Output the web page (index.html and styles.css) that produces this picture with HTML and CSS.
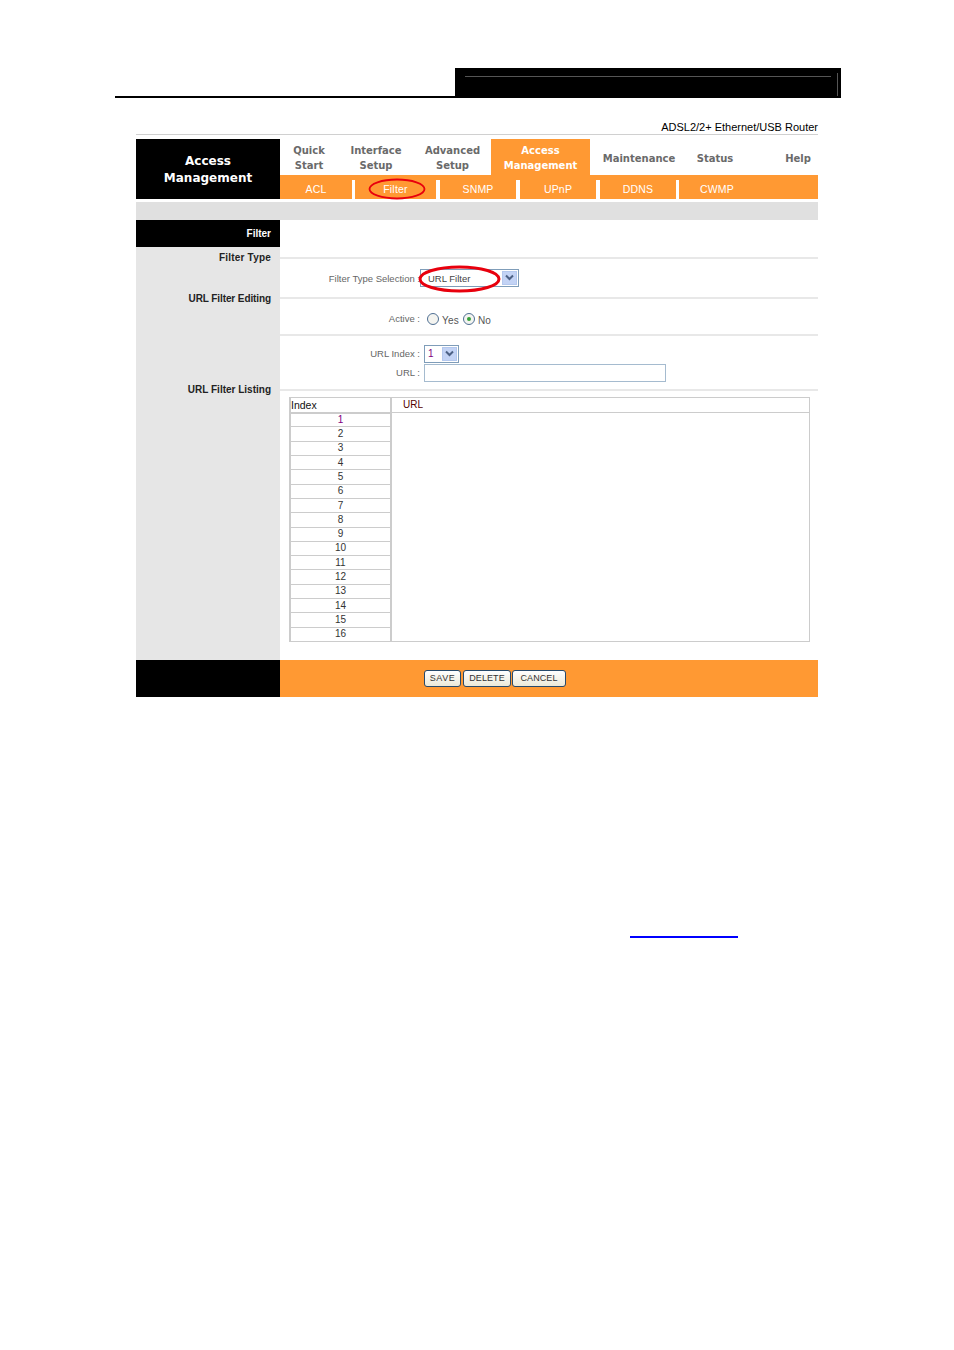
FILE: index.html
```html
<!DOCTYPE html>
<html lang="en">
<head>
    <meta charset="UTF-8">
    <title>Access Management - Filter</title>
    <link rel="stylesheet" href="styles.css">
</head>
<body>
    <div class="doc-header">
        <div class="doc-header-left"></div>
        <div class="doc-header-block">
            <div class="doc-header-line"></div>
            <div class="doc-header-tick"></div>
        </div>
    </div>

    <div class="router">
        <div class="model">ADSL2/2+ Ethernet/USB Router</div>

        <div class="top">
            <div class="brand">Access<br>Management</div>
            <div class="nav">
                <div class="tabs">
                    <div class="tab w-quick">Quick<br>Start</div>
                    <div class="tab w-iface">Interface<br>Setup</div>
                    <div class="tab w-adv">Advanced<br>Setup</div>
                    <div class="tab w-access active">Access<br>Management</div>
                    <div class="tab w-maint">Maintenance</div>
                    <div class="tab w-status">Status</div>
                    <div class="tab w-help">Help</div>
                </div>
                <div class="subtabs">
                    <div class="sub w-acl">ACL</div>
                    <div class="sep"></div>
                    <div class="sub w-filter">Filter
                        <svg class="mark mark-filter" width="58" height="22" viewBox="0 0 58 22"><ellipse cx="29" cy="11" rx="27.5" ry="9.5" /></svg>
                    </div>
                    <div class="sep sep-wide"></div>
                    <div class="sub w-sub">SNMP</div>
                    <div class="sep sep-wide"></div>
                    <div class="sub w-sub">UPnP</div>
                    <div class="sep sep-wide"></div>
                    <div class="sub w-sub">DDNS</div>
                    <div class="sep"></div>
                    <div class="sub w-sub">CWMP</div>
                </div>
            </div>
        </div>

        <div class="bar"></div>

        <div class="content">
            <div class="side">
                <div class="side-head">Filter</div>
                <div class="side-label first">Filter Type</div>
                <div class="side-label second">URL Filter Editing</div>
                <div class="side-label third">URL Filter Listing</div>
            </div>

            <div class="main">
                <div class="section s-top"></div>

                <div class="section s-type">
                    <div class="field">
                        <div class="field-label">Filter Type Selection :</div>
                        <div class="select select-type">
                            <span class="select-value">URL Filter</span>
                            <span class="select-btn"><svg width="9" height="7" viewBox="0 0 9 7"><path d="M1 1.5 L4.5 5 L8 1.5" /></svg></span>
                            <svg class="mark mark-type" width="84" height="28" viewBox="0 0 84 28"><ellipse cx="41.5" cy="14" rx="39.5" ry="12" /></svg>
                        </div>
                    </div>
                </div>

                <div class="section s-active">
                    <div class="field">
                        <div class="field-label">Active :</div>
                        <div class="radios">
                            <span class="radio"></span><span class="radio-text">Yes</span>
                            <span class="radio on"></span><span class="radio-text">No</span>
                        </div>
                    </div>
                </div>

                <div class="section s-url">
                    <div class="field">
                        <div class="field-label">URL Index :</div>
                        <div class="select select-index">
                            <span class="select-value purple">1</span>
                            <span class="select-btn"><svg width="9" height="7" viewBox="0 0 9 7"><path d="M1 1.5 L4.5 5 L8 1.5" /></svg></span>
                        </div>
                    </div>
                    <div class="field">
                        <div class="field-label">URL :</div>
                        <div class="input"></div>
                    </div>
                </div>

                <table class="list">
                    <thead>
                        <tr><th class="col-index">Index</th><th class="col-url">URL</th></tr>
                    </thead>
                    <tbody>
                        <tr><td class="purple">1</td><td class="url-cell" rowspan="16"></td></tr>
                        <tr><td>2</td></tr>
                        <tr><td>3</td></tr>
                        <tr><td>4</td></tr>
                        <tr><td>5</td></tr>
                        <tr><td>6</td></tr>
                        <tr><td>7</td></tr>
                        <tr><td>8</td></tr>
                        <tr><td>9</td></tr>
                        <tr><td>10</td></tr>
                        <tr><td>11</td></tr>
                        <tr><td>12</td></tr>
                        <tr><td>13</td></tr>
                        <tr><td>14</td></tr>
                        <tr><td>15</td></tr>
                        <tr><td>16</td></tr>
                    </tbody>
                </table>
            </div>
        </div>

        <div class="footer">
            <div class="footer-left"></div>
            <div class="footer-right">
                <button class="btn btn-save">SAVE</button>
                <button class="btn btn-delete">DELETE</button>
                <button class="btn btn-cancel">CANCEL</button>
            </div>
        </div>
    </div>

    <div class="link-line"></div>
</body>
</html>
```

FILE: styles.css
```css
/* Base */
* {
    margin: 0;
    padding: 0;
    box-sizing: border-box;
}

body {
    background: #fff;
    font-family: "Liberation Sans", sans-serif;
    font-size: 10px;
    color: #555;
    min-height: 1350px;
    padding-top: 68px;
}

/* Document header */
.doc-header {
    display: flex;
    align-items: flex-end;
    margin-left: 115px;
    width: 726px;
    height: 30px;
}

.doc-header-left {
    width: 340px;
    height: 2px;
    background: #000;
}

.doc-header-block {
    position: relative;
    width: 386px;
    height: 30px;
    background: #000;
}

.doc-header-line {
    position: absolute;
    left: 10px;
    top: 8px;
    width: 366px;
    height: 1px;
    background: #555;
}

.doc-header-tick {
    position: absolute;
    right: 3px;
    top: 5px;
    width: 1px;
    height: 23px;
    background: #555;
}

/* Router panel */
.router {
    margin-left: 136px;
    width: 682px;
}

.model {
    height: 37px;
    padding-top: 23px;
    line-height: 12px;
    text-align: right;
    font-size: 11px;
    color: #000;
    border-bottom: 1px solid #d0d0d0;
    margin-bottom: 4px;
}

.top {
    display: flex;
    height: 60px;
}

.brand {
    width: 144px;
    background: #000;
    color: #fff;
    font-family: "DejaVu Sans", sans-serif;
    font-weight: bold;
    font-size: 12px;
    line-height: 17px;
    text-align: center;
    padding-top: 14px;
}

.nav {
    flex: 1;
}

.tabs {
    display: flex;
    height: 36px;
}

.tab {
    display: flex;
    align-items: center;
    justify-content: center;
    text-align: center;
    height: 36px;
    padding-top: 2px;
    font-family: "DejaVu Sans", sans-serif;
    font-weight: bold;
    font-size: 10px;
    line-height: 15px;
    color: #6a6a6a;
}

.tab.active {
    background: #ff9933;
    color: #fff;
}

.w-quick { width: 58px; }
.w-iface { width: 76px; }
.w-adv { width: 77px; }
.w-access { width: 99px; }
.w-maint { width: 98px; }
.w-status { width: 54px; }
.w-help { width: 40px; margin-left: auto; }

.subtabs {
    display: flex;
    align-items: flex-end;
    height: 24px;
    background: #ff9933;
}

.sub {
    position: relative;
    height: 24px;
    line-height: 28px;
    text-align: center;
    color: #fff;
    font-size: 10.5px;
    letter-spacing: 0.2px;
}

.w-acl { width: 72px; }
.w-filter { width: 81px; }
.w-sub { width: 76px; }

.sep {
    width: 3px;
    height: 19px;
    background: #fff;
}

.sep-wide {
    width: 4px;
}

/* Red hand-drawn marks */
.mark {
    position: absolute;
    fill: none;
    stroke: #e8000d;
}

.mark-filter {
    left: 13px;
    top: 3px;
    stroke-width: 1.8;
}

.mark-type {
    left: -3px;
    top: -5px;
    stroke-width: 3;
}

.bar {
    height: 18px;
    margin-top: 3px;
    background: #e0e0e0;
}

/* Content */
.content {
    display: flex;
}

.side {
    width: 144px;
    height: 440px;
    background: #e6e6e6;
    color: #222;
    font-weight: bold;
    font-size: 10px;
}

.side-head {
    height: 27px;
    line-height: 27px;
    padding-right: 9px;
    text-align: right;
    background: #000;
    color: #fff;
}

.side-label {
    line-height: 12px;
    padding-right: 9px;
    text-align: right;
}

.side-label.first { margin-top: 5px; letter-spacing: 0.2px; }
.side-label.second { margin-top: 29px; letter-spacing: -0.1px; }
.side-label.third { margin-top: 79px; }

.main {
    flex: 1;
}

.section {
    border-bottom: 2px solid #e8e8e8;
}

.s-top { height: 39px; }
.s-type { height: 40px; padding-top: 9px; }
.s-active { height: 37px; padding-top: 10px; }
.s-url { height: 55px; padding-top: 8px; }

.field {
    display: flex;
    align-items: center;
    height: 19px;
}

.field-label {
    width: 140px;
    flex-shrink: 0;
    text-align: right;
    font-size: 9.5px;
    color: #666;
}

.s-type .field-label {
    padding-top: 2px;
}

.select {
    position: relative;
    display: flex;
    align-items: center;
    justify-content: space-between;
    background: #fff;
    border: 1px solid #7f9db9;
    color: #444;
}

.select-type {
    width: 99px;
    height: 18px;
}

.select-index {
    width: 35px;
    height: 18px;
    margin-left: 4px;
}

.select-value {
    padding-left: 3px;
}

.select-type .select-value {
    padding: 1px 0 0 7px;
    font-size: 9.5px;
}

.select-btn {
    display: flex;
    align-items: center;
    justify-content: center;
    width: 15px;
    height: 14px;
    margin-right: 1px;
    background: #c3d3f5;
    border: 1px solid #b4c8ee;
}

.select-btn path {
    fill: none;
    stroke: #4d6185;
    stroke-width: 2;
}

.input {
    width: 242px;
    height: 18px;
    margin-left: 4px;
    border: 1px solid #a5bbcf;
    background: #fff;
}

.radios {
    display: flex;
    align-items: center;
    margin-left: 7px;
}

.radio {
    position: relative;
    width: 12px;
    height: 12px;
    border: 1px solid #4f6f93;
    border-radius: 50%;
    background: #f4f4f0;
    margin-top: 1px;
}

.radio.on::after {
    content: "";
    position: absolute;
    left: 3px;
    top: 3px;
    width: 4px;
    height: 4px;
    border-radius: 50%;
    background: #35a13a;
}

.radio-text {
    margin: 3px 4px 0 3px;
    color: #555;
    letter-spacing: 0.2px;
}

.purple {
    color: #800080;
}

/* Listing table */
.list {
    width: 521px;
    height: 245px;
    margin: 6px 0 0 9px;
    border-collapse: collapse;
    table-layout: fixed;
    color: #333;
}

.list th {
    height: 15px;
    padding: 0;
    border: 2px solid #ccc;
    border-top-width: 1px;
    text-align: left;
    font-weight: normal;
    font-size: 10.5px;
    line-height: 12px;
    color: #111;
}

.col-index {
    width: 101px;
}

th.col-url {
    padding-left: 11px;
    border-width: 1px;
    font-size: 10px;
    color: #500;
}

.list td {
    height: 14.3px;
    padding: 0;
    line-height: 12px;
    text-align: center;
    border: 2px solid #ccc;
    border-top-width: 1px;
    border-bottom-width: 1px;
}

.list td.url-cell {
    border-width: 1px;
}

/* Footer */
.footer {
    display: flex;
    height: 37px;
}

.footer-left {
    width: 144px;
    background: #000;
}

.footer-right {
    flex: 1;
    display: flex;
    align-items: flex-start;
    padding: 10px 0 0 144px;
    background: #ff9933;
}

.btn {
    height: 17px;
    margin-right: 1px;
    padding-bottom: 2px;
    border: 1px solid #274a6b;
    border-radius: 3px;
    background: linear-gradient(180deg, #fff, #ece9d8);
    font-family: "Liberation Sans", sans-serif;
    font-size: 9px;
    color: #333;
    letter-spacing: 0.1px;
}

.btn-save { width: 37px; margin-right: 2px; letter-spacing: 0.5px; }
.btn-delete { width: 48px; }
.btn-cancel { width: 54px; }

.link-line {
    width: 108px;
    height: 2px;
    margin: 239px 0 0 630px;
    background: #0000ff;
}
```
